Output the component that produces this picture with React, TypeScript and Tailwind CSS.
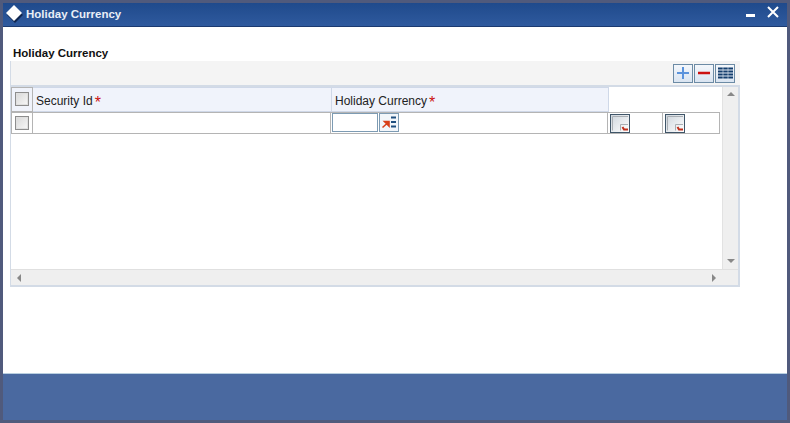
import React from "react";

const font = "font-['Liberation_Sans',Arial,sans-serif]";

const Check = () => (
  <span className="block w-[14px] h-[14px] border border-[#8d8d8d] bg-gradient-to-br from-[#d8d8d8] to-[#f8f8f8] shadow-[inset_0_0_0_1px_#e0e0e0]" />
);

const Star = () => (
  <span className="ml-[2px] text-[#cc1111] text-[16px] leading-[12px] align-[-3px]">*</span>
);

const LovIcon = () => (
  <span className="flex items-center justify-center w-[20px] h-[19px] border border-[#7d9bb3] bg-[#f2f6fa]">
    <svg width="16" height="13" viewBox="0 0 16 13">
      <path d="M1.5 11.5 L6 7.5 M3.5 5.5 H8 V10 Z" stroke="#d8401a" strokeWidth="1.6" fill="#d8401a" />
      <path d="M10 1.5 H15 M10 6 H15 M10 10.5 H15" stroke="#1f4f7f" strokeWidth="2" />
    </svg>
  </span>
);

const NoteIcon = () => (
  <span className="block w-[20px] h-[19px] border border-[#3f5568] bg-gradient-to-br from-[#cfd6dd] to-white">
    <svg width="18" height="17" viewBox="0 0 18 17">
      <path d="M1.5 15.5 V1.5 H17" stroke="#a9aeb3" fill="none" />
      <path d="M9.5 15.5 V9.5 H17" stroke="#a9aeb3" fill="none" />
      <path d="M11.5 12 L13 14.5 H17" stroke="#c0301c" strokeWidth="2" fill="none" />
    </svg>
  </span>
);

const ToolBtn = ({ children }: { children: React.ReactNode }) => (
  <span className="flex items-center justify-center w-[20px] h-[19px] border border-[#6c8ba5] bg-gradient-to-b from-[#f4f7fb] to-[#d9e4f1]">
    {children}
  </span>
);

export default function App() {
  return (
    <div className={`${font} w-[790px] h-[423px] bg-[#505a7c] p-[3px] flex flex-col overflow-hidden`}>
      {/* title bar */}
      <div className="h-[24px] shrink-0 flex items-center bg-gradient-to-b from-[#1f4a8c] to-[#2f5a9e] border-b border-[#1b3a70]">
        <svg width="18" height="18" viewBox="0 0 18 18" className="ml-[3px] mt-[-1px]">
          <path d="M9 2 L17 10 L9 18 L1 10 Z" fill="#10264f" />
          <path d="M8 0 L16 8 L8 16 L0 8 Z" fill="#ffffff" />
        </svg>
        <span className="ml-[2px] pt-[1px] text-[11.5px] font-bold text-[#e9eef6]">Holiday Currency</span>
        <div className="ml-auto flex items-start mr-[8px] h-full">
          <span className="block w-[9px] h-[3px] bg-white mt-[11px]" />
          <svg width="12" height="12" viewBox="0 0 12 12" className="ml-[12px] mt-[3px]">
            <path d="M1 1 L11 11 M11 1 L1 11" stroke="#ffffff" strokeWidth="2" />
          </svg>
        </div>
      </div>

      {/* body */}
      <div className="flex-1 bg-white border-b border-[#b9cfe0] pl-[7px]">
        <div className="h-[34px] pt-[19px] pl-[3px] text-[11.5px] font-bold leading-[14px] text-[#111]">Holiday Currency</div>
        <div className="w-[730px] h-[226px] border-r-2 border-b-2 border-l border-[#d3dbe6] flex flex-col">
          <div className="h-[26px] shrink-0 bg-[#f4f4f4] border-b-2 border-[#d3dbe6] flex items-center justify-end gap-[1px] pr-[5px] -mr-[2px]">
            <ToolBtn>
              <svg width="12" height="12" viewBox="0 0 12 12"><path d="M6 0 V12 M0 6 H12" stroke="#5b93dc" strokeWidth="2" /></svg>
            </ToolBtn>
            <ToolBtn>
              <svg width="12" height="12" viewBox="0 0 12 12"><path d="M0 6 H12" stroke="#cc1111" strokeWidth="2.5" /></svg>
            </ToolBtn>
            <ToolBtn>
              <svg width="15" height="13" viewBox="0 0 15 13"><path d="M0 1.5 H15 M0 4.5 H15 M0 7.5 H15 M0 10.5 H15" stroke="#153f6e" strokeWidth="2" /><path d="M5 0 V12 M10 0 V12" stroke="#dde7f2" strokeWidth="0.6" /></svg>
            </ToolBtn>
          </div>

          <div className="flex-1 flex min-h-0">
            <div className="flex-1">
              {/* header row */}
              <div className="flex h-[25px] text-[12px] text-[#222]">
                <div className="w-[22px] bg-[#f0f3fb] border border-[#b4b4b4] flex justify-center pt-[4px]">
                  <Check />
                </div>
                <div className="w-[299px] bg-[#f0f3fb] border-y border-r border-[#cfd8e8] pl-[3px] pt-[6px] leading-[14px]">
                  Security Id<Star />
                </div>
                <div className="w-[277px] bg-[#f0f3fb] border-y border-r border-[#cfd8e8] pl-[3px] pt-[6px] leading-[14px]">
                  Holiday Currency<Star />
                </div>
              </div>
              {/* data row */}
              <div className="flex h-[22px] w-[709px] border-y border-[#b4b4b4]">
                <div className="w-[22px] border-x border-[#b4b4b4] flex justify-center items-center">
                  <Check />
                </div>
                <div className="w-[298px] border-r border-[#b4b4b4]" />
                <div className="w-[277px] border-r border-[#b4b4b4] flex items-start pl-[1px] gap-[1px]">
                  <span className="block w-[46px] h-[19px] border border-[#7d9bb3] bg-white" />
                  <LovIcon />
                </div>
                <div className="w-[55px] border-r border-[#b4b4b4] pl-[2px] pt-[1px]">
                  <NoteIcon />
                </div>
                <div className="flex-1 border-r border-[#b4b4b4] pl-[2px] pt-[1px]">
                  <NoteIcon />
                </div>
              </div>
            </div>
            {/* vertical scrollbar */}
            <div className="w-[16px] shrink-0 bg-[#efefef] border-l border-[#e2e2e2] flex flex-col items-center justify-between pt-[5px] pb-[6px]">
              <span className="w-0 h-0 border-x-[4px] border-x-transparent border-b-[4px] border-b-[#888]" />
              <span className="w-0 h-0 border-x-[4px] border-x-transparent border-t-[4px] border-t-[#888]" />
            </div>
          </div>

          {/* horizontal scrollbar */}
          <div className="h-[16px] shrink-0 bg-[#efefef] border-t border-[#e0e0e0] flex items-center justify-between pl-[6px] pr-[22px]">
            <span className="w-0 h-0 border-y-[4px] border-y-transparent border-r-[4px] border-r-[#888]" />
            <span className="w-0 h-0 border-y-[4px] border-y-transparent border-l-[4px] border-l-[#888]" />
          </div>
        </div>
      </div>

      {/* footer */}
      <div className="h-[46px] shrink-0 bg-[#4a69a0]" />
    </div>
  );
}
